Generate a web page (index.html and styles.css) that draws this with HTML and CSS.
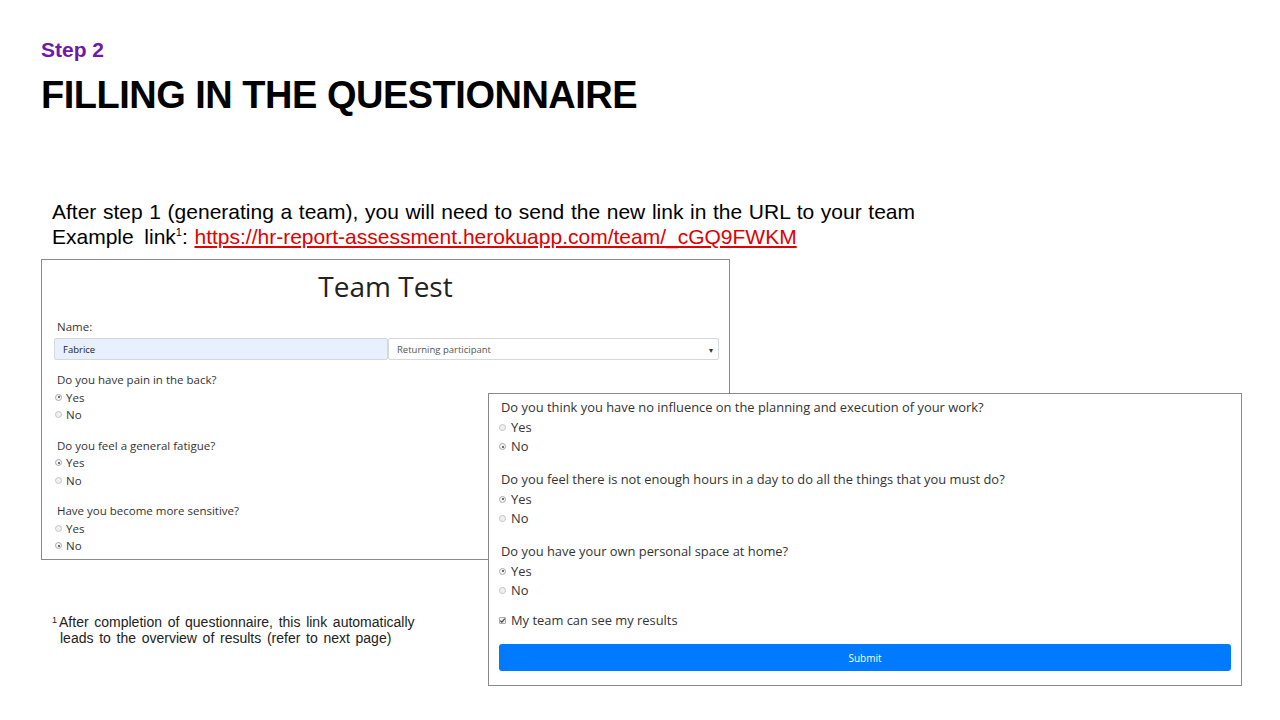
FILE: index.html
```html
<!DOCTYPE html>
<html lang="en">
<head>
<meta charset="utf-8">
<title>Step 2 - Filling in the questionnaire</title>
<link rel="stylesheet" href="styles.css">
</head>
<body>
<div class="slide">
  <header class="head">
    <div class="step">Step 2</div>
    <h1 class="title">FILLING IN THE QUESTIONNAIRE</h1>
  </header>

  <div class="intro">
    <p class="intro-line">After step 1 (generating a team), you will need to send the new link in the URL to your team</p>
    <p class="intro-line">Example <span class="gap"></span>link<sup class="sup">1</sup>: <a class="link" href="#">https://hr-report-assessment.herokuapp.com/team/_cGQ9FWKM</a></p>
  </div>

  <section class="shot shot-a">
    <div class="team-title">Team Test</div>
    <div class="name-label">Name:</div>
    <div class="name-row">
      <div class="field field-name">Fabrice</div>
      <div class="field field-select"><span>Returning participant</span><span class="caret">&#9662;</span></div>
    </div>
    <div class="q q-a">
      <div class="q-text">Do you have pain in the back?</div>
      <div class="opt"><span class="radio on"></span>Yes</div>
      <div class="opt"><span class="radio"></span>No</div>
    </div>
    <div class="q q-a">
      <div class="q-text">Do you feel a general fatigue?</div>
      <div class="opt"><span class="radio on"></span>Yes</div>
      <div class="opt"><span class="radio"></span>No</div>
    </div>
    <div class="q q-a">
      <div class="q-text">Have you become more sensitive?</div>
      <div class="opt"><span class="radio"></span>Yes</div>
      <div class="opt"><span class="radio on"></span>No</div>
    </div>
  </section>

  <section class="shot shot-b">
    <div class="q q-b">
      <div class="q-text">Do you think you have no influence on the planning and execution of your work?</div>
      <div class="opt"><span class="radio"></span>Yes</div>
      <div class="opt"><span class="radio on"></span>No</div>
    </div>
    <div class="q q-b">
      <div class="q-text">Do you feel there is not enough hours in a day to do all the things that you must do?</div>
      <div class="opt"><span class="radio on"></span>Yes</div>
      <div class="opt"><span class="radio"></span>No</div>
    </div>
    <div class="q q-b">
      <div class="q-text">Do you have your own personal space at home?</div>
      <div class="opt"><span class="radio on"></span>Yes</div>
      <div class="opt"><span class="radio"></span>No</div>
    </div>
    <div class="opt check-row"><span class="check"><svg width="7" height="7" viewBox="0 0 7 7"><path d="M1.3 3.6 L2.9 5.2 L5.8 1.6" fill="none" stroke="#444" stroke-width="1.2"/></svg></span>My team can see my results</div>
    <div class="submit">Submit</div>
  </section>

  <p class="footnote"><sup class="fn-sup">1</sup>After completion of questionnaire, this link automatically<br><span class="fn-indent">leads to the overview of results (refer to next page)</span></p>
</div>
</body>
</html>
```

FILE: styles.css
```css
* { box-sizing: border-box; }
html, body { margin: 0; padding: 0; background: #fff; }
.slide {
  position: relative;
  width: 1280px;
  height: 720px;
  overflow: hidden;
  background: #fff;
  font-family: "Liberation Sans", Arial, sans-serif;
  color: #000;
}
.head {
  padding: 38px 0 0 41px;
}
.step {
  color: #7018a8;
  font-weight: bold;
  font-size: 21px;
  line-height: 24px;
}
.title {
  margin: 11px 0 0 0;
  font-size: 38px;
  line-height: 44px;
  font-weight: bold;
  letter-spacing: -0.5px;
}
.intro {
  margin: 82px 0 0 52px;
  font-size: 21px;
  line-height: 25px;
  word-spacing: 0.8px;
}
.intro-line { margin: 0; white-space: nowrap; }
.gap { display: inline-block; width: 4px; }
.sup { font-size: 11px; vertical-align: 8px; line-height: 0; }
.link { color: #e00000; text-decoration: underline; }

.shot {
  position: absolute;
  background: #fff;
  border: 1px solid #8a8a8a;
  font-family: "Open Sans", "Noto Sans", sans-serif;
  color: #333;
}
.shot-a {
  left: 41px;
  top: 259px;
  width: 689px;
  height: 301px;
  padding: 8px 10px 0 12px;
  font-size: 11.5px;
}
.team-title {
  text-align: center;
  font-size: 28px;
  line-height: 36px;
  color: #222;
  padding-right: 2px;
}
.name-label {
  margin: 14px 0 3px 3px;
  line-height: 17px;
}
.name-row {
  display: flex;
  height: 22px;
}
.field {
  flex: 1;
  display: flex;
  align-items: center;
  font-size: 9.5px;
  border: 1px solid #d6d9dc;
  border-radius: 2px;
  padding: 0 8px;
}
.field-name { background: #e8f0fe; color: #222; }
.field-select { background: #fff; color: #555; justify-content: space-between; padding-right: 5px; }
.caret { font-size: 8px; color: #333; }

.q-a { margin-top: 11px; line-height: 17.5px; }
.q-a + .q-a { margin-top: 13px; }
.q-text { margin-left: 3px; }
.opt { display: flex; align-items: center; }
.radio {
  width: 7px;
  height: 7px;
  border-radius: 50%;
  border: 1px solid #c4c4c4;
  background: #f0f0f0;
  margin: 0 4px 0 1px;
  position: relative;
  flex: none;
}
.radio.on { background: #f4f4f4; border-color: #aaa; }
.radio.on::after {
  content: "";
  position: absolute;
  left: 1.5px;
  top: 1.5px;
  width: 2px;
  height: 2px;
  border-radius: 50%;
  background: #444;
}

.shot-b {
  left: 488px;
  top: 393px;
  width: 754px;
  height: 293px;
  padding: 4px 10px 0 10px;
  font-size: 12.9px;
}
.q-b { line-height: 19.5px; }
.q-b + .q-b { margin-top: 13.5px; }
.q-b .q-text { margin-left: 2px; }
.q-b .radio { margin: 0 5px 0 0; }
.check-row { margin-top: 10px; line-height: 19.5px; }
.check {
  width: 7px;
  height: 7px;
  border: 1px solid #aaa;
  border-radius: 1px;
  background: #f2f2f2;
  margin-right: 5px;
  display: flex;
  align-items: center;
  justify-content: center;
  overflow: hidden;
}
.check svg { display: block; margin: -1px; }
.submit {
  margin-top: 14px;
  height: 27px;
  background: #007bff;
  border-radius: 3px;
  color: #fff;
  font-size: 10px;
  display: flex;
  align-items: center;
  justify-content: center;
}

.footnote {
  position: absolute;
  left: 52px;
  top: 614px;
  margin: 0;
  font-size: 14px;
  line-height: 16px;
  word-spacing: 1.8px;
  color: #222;
}
.fn-sup { font-size: 9px; vertical-align: 4px; line-height: 0; margin-right: 2px; }
.fn-indent { padding-left: 8px; }
```
